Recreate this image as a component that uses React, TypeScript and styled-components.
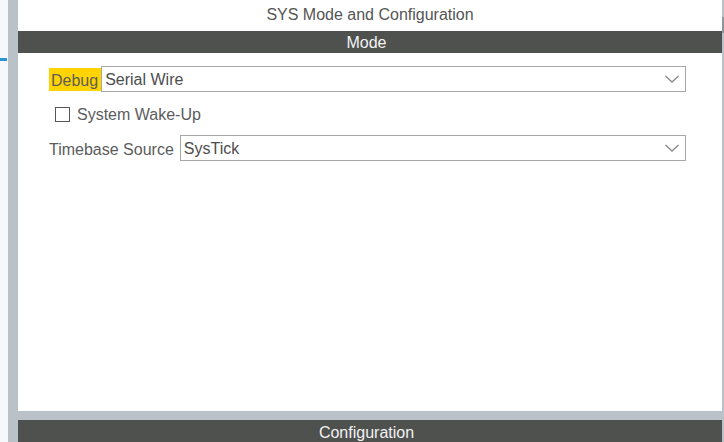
import React from 'react'
import styled, { createGlobalStyle } from 'styled-components'

const GlobalStyle = createGlobalStyle`
  html, body {
    margin: 0;
    padding: 0;
    background: #ffffff;
    overflow: hidden;
  }
  body {
    font-family: "Liberation Sans", Arial, sans-serif;
  }
`

const Frame = styled.div`
  display: flex;
  width: 724px;
  height: 442px;
  overflow: hidden;
`

const Gutter = styled.div`
  width: 8px;
  flex: none;
  background: #f7f8f9;
  display: flex;
  flex-direction: column;
`

const GutterTick = styled.div`
  margin-top: 58px;
  width: 7px;
  height: 3px;
  background: #2b95d6;
`

const Workspace = styled.div`
  flex: 1;
  display: flex;
  flex-direction: column;
  background: #b9c2c8;
  padding-left: 10px;
`

const Panel = styled.div`
  height: 411px;
  flex: none;
  background: #ffffff;
  display: flex;
  flex-direction: column;
  margin-right: 2px;
`

const Title = styled.div`
  height: 31px;
  line-height: 29px;
  text-align: center;
  font-size: 16px;
  color: #555555;
`

const SectionBar = styled.div<{ $gap?: number; $tall?: boolean }>`
  height: ${p => (p.$tall ? 26 : 22)}px;
  line-height: ${p => (p.$tall ? 26 : 23)}px;
  flex: none;
  margin-top: ${p => p.$gap ?? 0}px;
  background: #4f514f;
  color: #f2f2f2;
  font-size: 16px;
  text-align: center;
  padding-right: 7px;
`

const BottomBar = styled(SectionBar)`
  margin-right: 2px;
`

const Content = styled.div`
  padding: 13px 36px 0 31px;
  display: flex;
  flex-direction: column;
`

const FieldRow = styled.div`
  display: flex;
  align-items: center;
  height: 26px;
`

const Label = styled.span<{ $highlight?: boolean }>`
  font-size: 16px;
  color: #5c5c5c;
  height: 23px;
  line-height: 25px;
  padding: 0 ${p => (p.$highlight ? 3 : 0)}px 0 ${p => (p.$highlight ? 2 : 0)}px;
  margin-right: ${p => (p.$highlight ? 0 : 6)}px;
  background: ${p => (p.$highlight ? '#ffd400' : 'transparent')};
`

const Select = styled.div`
  flex: 1;
  height: 26px;
  box-sizing: border-box;
  border: 1px solid #a7a7a7;
  display: flex;
  align-items: center;
  padding: 0 5px 0 3px;
  font-size: 16px;
  color: #4d4d4d;
`

const SelectValue = styled.span`
  flex: 1;
  padding-top: 2px;
`

const CheckRow = styled.div`
  display: flex;
  align-items: center;
  height: 42px;
  padding-left: 6px;
  padding-top: 1px;
`

const Box = styled.span`
  width: 15px;
  height: 15px;
  box-sizing: border-box;
  border: 1.5px solid #555555;
  margin-right: 7px;
`

const CheckText = styled.span`
  font-size: 16px;
  color: #5c5c5c;
  padding-top: 2px;
`

const RightRail = styled.div`
  position: absolute;
  top: 0;
  right: 0;
  width: 2px;
  height: 442px;
  background: #b9c2c8;
`

const RailThumb = styled.div`
  margin-top: 17px;
  height: 16px;
  background: #8e979d;
`

const Chevron = () => (
  <svg width="16" height="10" viewBox="0 0 16 10">
    <path d="M1.5 2 L8 8 L14.5 2" fill="none" stroke="#8a8a8a" strokeWidth="1.3" />
  </svg>
)

const Dropdown: React.FC<{ value: string }> = ({ value }) => (
  <Select>
    <SelectValue>{value}</SelectValue>
    <Chevron />
  </Select>
)

export default function App() {
  return (
    <>
      <GlobalStyle />
      <Frame>
        <Gutter>
          <GutterTick />
        </Gutter>
        <Workspace>
          <Panel>
            <Title>SYS Mode and Configuration</Title>
            <SectionBar>Mode</SectionBar>
            <Content>
              <FieldRow>
                <Label $highlight>Debug</Label>
                <Dropdown value="Serial Wire" />
              </FieldRow>
              <CheckRow>
                <Box />
                <CheckText>System Wake-Up</CheckText>
              </CheckRow>
              <FieldRow>
                <Label>Timebase Source</Label>
                <Dropdown value="SysTick" />
              </FieldRow>
            </Content>
          </Panel>
          <BottomBar $gap={9} $tall>Configuration</BottomBar>
        </Workspace>
        <RightRail>
          <RailThumb />
        </RightRail>
      </Frame>
    </>
  )
}
